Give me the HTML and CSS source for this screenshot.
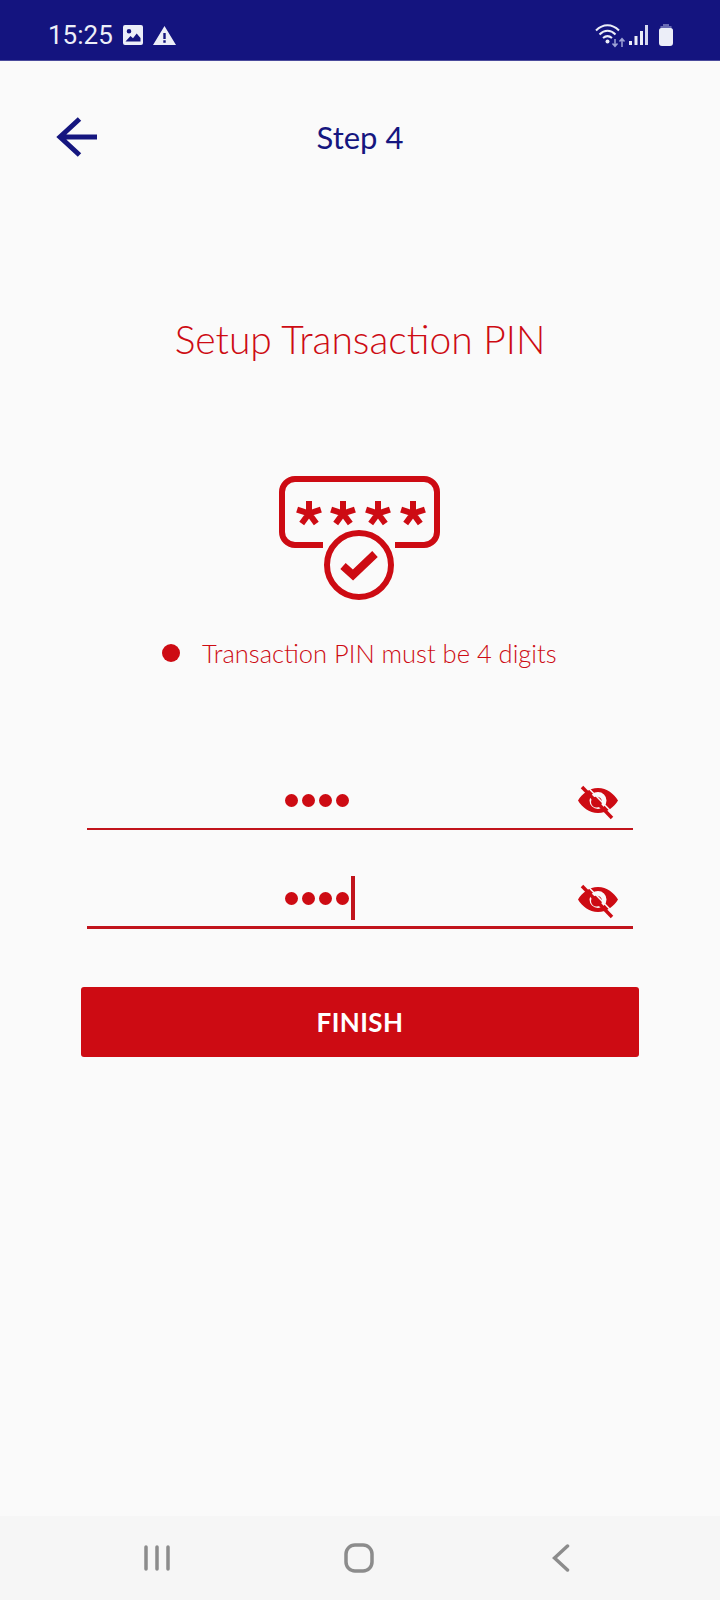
FILE: index.html
```html
<!DOCTYPE html>
<html lang="en">
<head>
    <meta charset="UTF-8">
    <meta name="viewport" content="width=device-width, initial-scale=1.0">
    <title>Setup Transaction PIN</title>
    <link rel="stylesheet" href="styles.css">
</head>
<body>
    <div class="status-bar">
        <div class="status-left">
            <span class="clock">15:25</span>
            <svg class="icon-image" width="20" height="20" viewBox="0 0 20 20">
                <path fill="#eceef8" fill-rule="evenodd" d="M2 0h16a2 2 0 0 1 2 2v16a2 2 0 0 1-2 2H2a2 2 0 0 1-2-2V2a2 2 0 0 1 2-2zM2.500 16.500h15v-3.500l-3.800-4.500-3.700 4.800-2.500-2.300zM6 4a2.300 2.300 0 1 0 0 4.600A2.300 2.300 0 0 0 6 4z"/>
            </svg>
            <svg class="icon-warning" width="23" height="19" viewBox="0 0 23 19">
                <path fill="#eceef8" fill-rule="evenodd" d="M11.500 0L23 19H0zM10.300 7v6h2.400V7zM10.300 14.300v2.400h2.400v-2.400z"/>
            </svg>
        </div>
        <div class="status-right">
            <svg width="32" height="26" viewBox="0 0 32 26" fill="none">
                <path stroke="#eceef8" stroke-width="2" d="M1 8.500C8 1.500 17 1.500 24 8.500M4.500 12.500C9.500 7.500 15.500 7.500 20.500 12.500M8 16C11 13.500 14 13.500 17 16"/>
                <circle cx="12.500" cy="19.500" r="2" fill="#eceef8"/>
                <path stroke="#9ea3d6" stroke-width="1.500" d="M20 17v7M17.500 21.500l2.500 2.800 2.500-2.800M27 25v-8M24.500 19.500l2.500-2.800 2.500 2.800"/>
            </svg>
            <svg class="icon-signal" width="19" height="20" viewBox="0 0 19 20">
                <rect x="0" y="16" width="3" height="4" fill="#eceef8"/>
                <rect x="5.500" y="11" width="3" height="9" fill="#eceef8"/>
                <rect x="11" y="6" width="3" height="14" fill="#eceef8"/>
                <rect x="16" y="0" width="3" height="20" fill="#d5d8f0"/>
            </svg>
            <svg class="icon-battery" width="14" height="22" viewBox="0 0 14 22">
                <path fill="#6a6cb4" d="M4 0h6v2h2.500v4h-11V2H4z"/>
                <path fill="#eceef8" d="M2.500 4h9A2.500 2.500 0 0 1 14 6.500V19a3 3 0 0 1-3 3H3a3 3 0 0 1-3-3V6.500A2.500 2.500 0 0 1 2.500 4z"/>
            </svg>
        </div>
    </div>

    <div class="content">
        <div class="top-bar">
            <svg class="back-arrow" width="42" height="42" viewBox="0 0 42 42" fill="none">
                <path stroke="#15167f" stroke-width="5" d="M41 21H5M23.500 3L4 21 23.500 39"/>
            </svg>
            <span class="step">Step 4</span>
        </div>

        <h1 class="title">Setup Transaction PIN</h1>

        <svg class="pin-icon" width="164" height="124" viewBox="0 0 164 124" fill="none">
            <path stroke="#cd0b13" stroke-width="6" d="M44 69H16A13 13 0 0 1 3 56V16A13 13 0 0 1 16 3H145A13 13 0 0 1 158 16V56A13 13 0 0 1 145 69H116"/>
            <g stroke="#cd0b13" stroke-width="6">
                <path id="star" d="M30 37.500V25M30 37.500L41.900 33.600M30 37.500L37.300 47.600M30 37.500L22.700 47.600M30 37.500L18.100 33.600"/>
                <use href="#star" x="34"/>
                <use href="#star" x="69"/>
                <use href="#star" x="104"/>
            </g>
            <circle cx="80" cy="89" r="32" stroke="#cd0b13" stroke-width="6"/>
            <path stroke="#cd0b13" stroke-width="8" d="M64 90L74 99 96 78"/>
        </svg>

        <div class="rule-row">
            <span class="bullet"></span>
            <span class="rule-text">Transaction PIN must be 4 digits</span>
        </div>

        <div class="pin-field first">
            <div class="dots"><i></i><i></i><i></i><i></i></div>
            <svg class="eye" width="40" height="40" viewBox="0 0 40 40">
                <path fill="#cd0b13" fill-rule="evenodd" d="M20 4C29 4 36 10 40 16.500 36 23 29 29 20 29 11 29 4 23 0 16.500 4 10 11 4 20 4zM20 8A8.500 8.500 0 1 0 20 25 8.500 8.500 0 0 0 20 8z"/>
                <circle cx="18.500" cy="18" r="5.500" fill="#cd0b13"/>
                <path stroke="#fafafa" stroke-width="1.500" d="M7 0.500L37 31.500"/>
                <path stroke="#cd0b13" stroke-width="3.500" d="M4 3L34 34"/>
            </svg>
        </div>
        <div class="pin-field second">
            <div class="dots"><i></i><i></i><i></i><i></i><span class="caret"></span></div>
            <svg class="eye" width="40" height="40" viewBox="0 0 40 40">
                <path fill="#cd0b13" fill-rule="evenodd" d="M20 4C29 4 36 10 40 16.500 36 23 29 29 20 29 11 29 4 23 0 16.500 4 10 11 4 20 4zM20 8A8.500 8.500 0 1 0 20 25 8.500 8.500 0 0 0 20 8z"/>
                <circle cx="18.500" cy="18" r="5.500" fill="#cd0b13"/>
                <path stroke="#fafafa" stroke-width="1.500" d="M7 0.500L37 31.500"/>
                <path stroke="#cd0b13" stroke-width="3.500" d="M4 3L34 34"/>
            </svg>
        </div>

        <button class="finish" type="button">FINISH</button>
    </div>

    <div class="nav-bar">
        <svg width="26" height="26" viewBox="0 0 26 26" fill="none" stroke="#8c8c8c" stroke-width="3.500" stroke-linecap="round">
            <path d="M2 2V24M13 2V24M24 2V24"/>
        </svg>
        <svg class="nav-home" width="30" height="30" viewBox="0 0 30 30" fill="none" stroke="#8c8c8c" stroke-width="3.500">
            <rect x="2" y="2" width="26" height="26" rx="9"/>
        </svg>
        <svg width="18" height="28" viewBox="0 0 18 28" fill="none" stroke="#8c8c8c" stroke-width="3.500" stroke-linecap="round">
            <path d="M15.500 2L2.500 14 15.500 26"/>
        </svg>
    </div>
</body>
</html>
```

FILE: styles.css
```css
* {
    box-sizing: border-box;
}

body {
    margin: 0;
    height: 1600px;
    display: flex;
    flex-direction: column;
    background-color: #fafafa;
    font-family: Lato, sans-serif;
    color: #cd0b13;
}

.status-bar {
    height: 61px;
    flex-shrink: 0;
    display: flex;
    justify-content: space-between;
    align-items: center;
    padding: 10px 47px 0 48px;
    background-color: #14147f;
    border-bottom: 1px solid #4a4b9c;
}

.status-left {
    display: flex;
    align-items: center;
}

.clock {
    font-family: Roboto, sans-serif;
    font-size: 26px;
    color: #eceef8;
    width: 75px;
}

.icon-warning {
    margin-left: 10px;
}

.status-right {
    display: flex;
    align-items: center;
    gap: 6px;
}

.icon-signal {
    margin: 0 5px 0 -4px;
}

.content {
    flex: 1;
    display: flex;
    flex-direction: column;
    align-items: center;
}

.top-bar {
    width: 100%;
    height: 42px;
    margin-top: 55px;
    padding-left: 56px;
    display: flex;
    align-items: center;
    position: relative;
}

.step {
    position: absolute;
    left: 0;
    right: 0;
    text-align: center;
    font-size: 31px;
    color: #15167f;
}

.title {
    margin: 151px 0 0;
    height: 60px;
    line-height: 60px;
    font-size: 39px;
    font-weight: 300;
}

.pin-icon {
    margin-top: 107px;
    margin-left: 1px;
}

.rule-row {
    margin-top: 33px;
    height: 40px;
    width: 100%;
    padding-left: 162px;
    display: flex;
    align-items: center;
}

.bullet {
    width: 18px;
    height: 18px;
    border-radius: 50%;
    background-color: #cd0b13;
    margin-right: 22px;
}

.rule-text {
    font-size: 25.500px;
    font-weight: 300;
}

.pin-field {
    width: 546px;
    height: 58px;
    padding-right: 86px;
    display: flex;
    align-items: center;
    justify-content: center;
    position: relative;
    border-bottom: 2px solid #c1141c;
}

.pin-field.first {
    margin-top: 99px;
}

.pin-field.second {
    margin-top: 39px;
    height: 60px;
    padding-top: 2px;
    border-bottom-width: 3px;
}

.dots {
    display: flex;
    align-items: center;
    gap: 4px;
    position: relative;
}

.dots i {
    width: 13px;
    height: 13px;
    border-radius: 50%;
    background-color: #cd0b13;
}

.caret {
    position: absolute;
    left: 66px;
    top: -16px;
    width: 4px;
    height: 44px;
    background-color: #c1141c;
}

.eye {
    position: absolute;
    right: 15px;
    top: 14px;
}

.pin-field.first .eye {
    top: 12px;
}

.finish {
    width: 558px;
    height: 70px;
    margin-top: 58px;
    border: none;
    border-radius: 3px;
    background-color: #cd0b13;
    color: #ffffff;
    font-family: Lato, sans-serif;
    font-size: 26px;
    font-weight: 700;
    letter-spacing: 0.4px;
}

.nav-bar {
    height: 84px;
    flex-shrink: 0;
    display: flex;
    justify-content: space-between;
    align-items: center;
    padding: 0 150px 0 144px;
    background-color: #f6f6f6;
}

.nav-home {
    margin-right: 4px;
}
```
